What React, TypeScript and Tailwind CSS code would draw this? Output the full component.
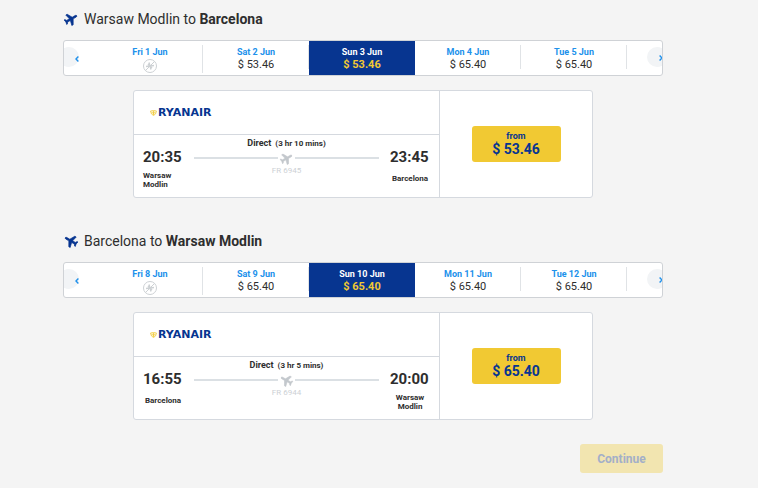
import React from "react";

type Day = { label: string; price?: string; selected?: boolean };
type Flight = {
  id: string;
  from: string;
  to: string;
  returning?: boolean;
  days: Day[];
  depart: string;
  arrive: string;
  duration: string;
  number: string;
  price: string;
};

const flights: Flight[] = [
  {
    id: "out",
    from: "Warsaw Modlin",
    to: "Barcelona",
    days: [
      { label: "Fri 1 Jun" },
      { label: "Sat 2 Jun", price: "$ 53.46" },
      { label: "Sun 3 Jun", price: "$ 53.46", selected: true },
      { label: "Mon 4 Jun", price: "$ 65.40" },
      { label: "Tue 5 Jun", price: "$ 65.40" },
    ],
    depart: "20:35",
    arrive: "23:45",
    duration: "(3 hr 10 mins)",
    number: "FR 6945",
    price: "$ 53.46",
  },
  {
    id: "back",
    from: "Barcelona",
    to: "Warsaw Modlin",
    returning: true,
    days: [
      { label: "Fri 8 Jun" },
      { label: "Sat 9 Jun", price: "$ 65.40" },
      { label: "Sun 10 Jun", price: "$ 65.40", selected: true },
      { label: "Mon 11 Jun", price: "$ 65.40" },
      { label: "Tue 12 Jun", price: "$ 65.40" },
    ],
    depart: "16:55",
    arrive: "20:00",
    duration: "(3 hr 5 mins)",
    number: "FR 6944",
    price: "$ 65.40",
  },
];

function Plane({ className }: { className: string }) {
  return (
    <svg viewBox="1 1 22 22" className={className} fill="currentColor" stroke="currentColor" strokeWidth="1" strokeLinejoin="round" aria-hidden="true">
      <path d="M21.500 16v-2.500L13.500 9V3.500C13.500 2.500 12.800 1.500 12 1.500s-1.500 1-1.500 2V9l-8 4.500V16l8-2V19l-2.500 1.800V22.300L12 21.300l4 1V20.800L13.500 19v-5z" />
    </svg>
  );
}

function NoFlight() {
  return (
    <svg viewBox="0 0 16 16" className="h-4 w-4 text-[#cdd1d4]" fill="none" stroke="currentColor" role="img" aria-label="No flights">
      <circle cx="8" cy="8" r="6.500" />
      <path d="M3.500 12.500 12.500 3.500" />
      <path d="M4 8.500 12 7.500M7 4.500l2 7M6 6l4 4" strokeWidth="1.400" />
    </svg>
  );
}

function Chevron({ right }: { right?: boolean }) {
  return (
    <svg viewBox="0 0 4 6" className="h-[6px] w-1 shrink-0 text-[#2091eb]" fill="none" stroke="currentColor" strokeWidth="1.400" aria-hidden="true">
      <path d={right ? "M.6.5 3 3 .6 5.500" : "M3.400.5 1 3l2.400 2.500"} />
    </svg>
  );
}

function DateStrip({ days }: { days: Day[] }) {
  return (
    <div className="relative mt-[10px] flex h-9 overflow-hidden rounded-[3px] border border-[#cfd2d6] bg-white pl-[33px]">
      {days.map((day) => (
        <button
          key={day.label}
          type="button"
          className={
            "relative flex w-[106px] shrink-0 flex-col items-center pt-[5px] " +
            (day.selected ? "bg-[#073590] text-white" : "text-[#2091eb]")
          }
        >
          <span className="text-[9px] leading-3 font-bold">{day.label}</span>
          {day.price ? (
            <span className={"text-[11px] leading-[13px] " + (day.selected ? "font-bold text-[#f1c933]" : "text-[#2e2e2e]")}>
              {day.price}
            </span>
          ) : (
            <NoFlight />
          )}
          {!day.selected && (
            <span className={"absolute top-1 right-0 w-px bg-[#e0e3e6] " + (day.price ? "h-6" : "h-7")} />
          )}
        </button>
      ))}
      <button type="button" aria-label="Earlier dates" className="absolute top-[6px] left-[-5px] flex h-5 w-5 items-center justify-end rounded-full bg-[#f2f4f6] pt-1">
        <Chevron />
      </button>
      <button type="button" aria-label="Later dates" className="absolute top-[6px] right-[-5px] flex h-5 w-5 items-center justify-center rounded-full bg-[#f2f4f6] pl-2 pt-[2px]">
        <Chevron right />
      </button>
    </div>
  );
}

function Endpoint({ time, place, align }: { time: string; place: string; align: string }) {
  return (
    <div className="min-h-11 w-10 shrink-0">
      <div className="text-[15px] leading-5 font-bold">{time}</div>
      <div className={"mt-1 flex min-h-[14px] flex-col justify-center text-[8px] leading-[9px] font-bold " + align}>{place}</div>
    </div>
  );
}

function Logo() {
  return (
    <div className="flex items-center gap-px pl-4 text-[#073590]">
      <svg viewBox="0 0 14 12" className="h-[6px] w-[7px] text-[#f1c933]" fill="none" stroke="currentColor" strokeWidth="1.600" aria-hidden="true">
        <path d="M1 2Q7 0 13 2M1 2l2 6 4 3 4-3 2-6M3 4.500h8M5 7.500h4M7 2v8" />
      </svg>
      <span className="font-['DejaVu_Sans',sans-serif] text-[11px] leading-3 font-bold">RYANAIR</span>
    </div>
  );
}

function FlightCard({ flight }: { flight: Flight }) {
  return (
    <article className="mx-[70px] mt-[14px] flex rounded-[3px] border border-[#d5d9df] bg-white">
      <div className="flex-1 border-r border-[#d5d9df]">
        <div className="flex h-11 items-center border-b border-[#d5d9df]">
          <Logo />
        </div>
        <div className="flex justify-between gap-[11px] px-[9px] pt-3 pb-[6px]">
          <Endpoint time={flight.depart} place={flight.from} align={flight.returning ? "text-center" : "text-left"} />
          <div className="-mt-[10px] flex flex-1 flex-col items-center">
            <div className="flex items-baseline gap-1 leading-3 font-bold">
              <span className="text-[9px]">Direct</span>
              <span className="text-[8px]">{flight.duration}</span>
            </div>
            <div className="flex h-4 w-full items-center gap-[2px] text-[#c3c8cd]">
              <span className="h-[2px] flex-1 bg-[#dbe0e4]" />
              <Plane className={"h-[13px] w-[13px] " + (flight.returning ? "-rotate-60" : "rotate-60")} />
              <span className="h-[2px] flex-1 bg-[#dbe0e4]" />
            </div>
            <span className="text-[8px] leading-[9px] text-[#cdd1d5]">{flight.number}</span>
          </div>
          <Endpoint time={flight.arrive} place={flight.to} align="text-center" />
        </div>
      </div>
      <div className="flex w-[152px] items-center justify-center">
        <button type="button" className="h-9 w-[89px] rounded-[3px] bg-[#f1c933] font-bold text-[#073590]">
          <span className="block text-[9px] leading-[10px]">from</span>
          <span className="block text-[14px] leading-4">{flight.price}</span>
        </button>
      </div>
    </article>
  );
}

export default function App() {
  return (
    <main className="min-h-screen bg-[#f4f4f4] pt-2 pr-8 font-[Roboto,sans-serif] text-[#2e2e2e]">
      <div className="mx-auto max-w-[600px]">
        {flights.map((flight) => (
          <section key={flight.id} className="mb-8">
            <h2 className="flex h-[22px] items-center gap-[6px] pl-px text-[14px] leading-[22px]">
              <Plane className={"h-[14px] w-[14px] text-[#073590] " + (flight.returning ? "-rotate-60" : "rotate-60")} />
              <span>
                {flight.from} to <strong>{flight.to}</strong>
              </span>
            </h2>
            <DateStrip days={flight.days} />
            <FlightCard flight={flight} />
          </section>
        ))}
        <div className="-mt-2 flex justify-end pb-4">
          <button type="button" disabled className="h-[29px] w-[83px] rounded-[3px] bg-[#f2e5b0] text-[12px] font-bold text-[#a3afc8]">
            Continue
          </button>
        </div>
      </div>
    </main>
  );
}
